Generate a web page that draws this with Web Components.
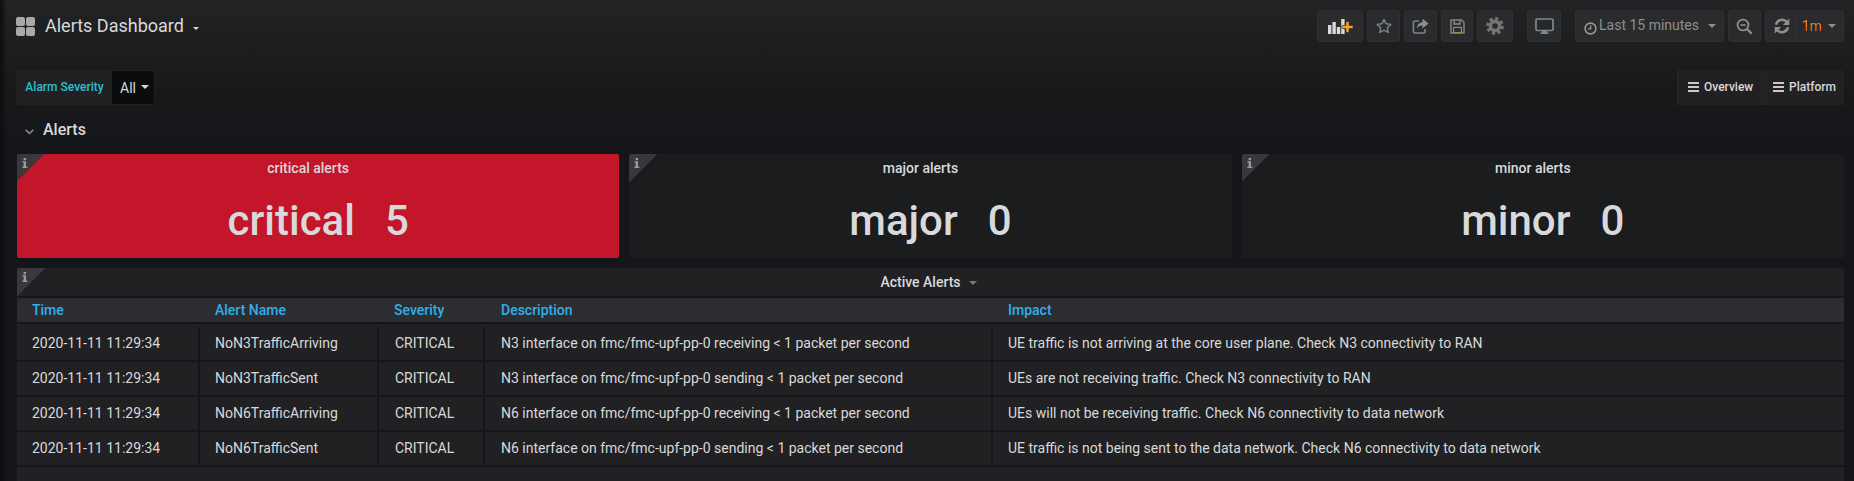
<!doctype html>
<html>
<head>
<meta charset="utf-8">
<title>Alerts Dashboard</title>
<style>
  html, body { margin: 0; height: 481px; overflow: hidden; }
  body {
    font-family: Roboto, "Liberation Sans", sans-serif;
    font-size: 14px;
    color: #d8d9da;
    background:
      linear-gradient(to right, #0c0d0f 0, rgba(12,13,15,0) 7px),
      linear-gradient(to bottom, #222324 0, #19191b 90px, #141619 150px);
  }
</style>
</head>
<body>
<gf-navbar title-text="Alerts Dashboard">
  <gf-btn w="46">
    <svg width="26" height="16" viewBox="0 0 26 16">
      <g fill="#d8d9da"><rect x="1" y="7" width="3.4" height="9"/><rect x="5.4" y="4" width="3.4" height="12"/><rect x="9.8" y="9" width="3.4" height="7"/><rect x="14.2" y="1" width="3.4" height="15"/></g>
      <path d="M19 3.5h3v4h4v3h-4v4h-3v-4h-4v-3h4z" fill="#f5a623" stroke="#26272a" stroke-width=".6"/>
    </svg>
  </gf-btn>
  <gf-btn w="33">
    <svg width="16" height="16" viewBox="0 0 16 16"><path d="M8 1.4l2 4.4 4.8.6-3.5 3.3.9 4.8L8 12.1l-4.2 2.4.9-4.8L1.2 6.4 6 5.8z" fill="none" stroke="#7f8589" stroke-width="1.4" stroke-linejoin="round"/></svg>
  </gf-btn>
  <gf-btn w="33">
    <svg width="17" height="16" viewBox="0 0 17 16"><path d="M7 3H3a1.6 1.6 0 0 0-1.6 1.6v8.8A1.6 1.6 0 0 0 3 15h8.5a1.6 1.6 0 0 0 1.6-1.6V11" fill="none" stroke="#7f8589" stroke-width="1.6"/><path d="M10.5 0.8L16.5 5.6l-6 4.8V7.6C7.6 7.6 6 8.6 5 11c0-4 2-6.6 5.5-6.8z" fill="#8e8e8e"/></svg>
  </gf-btn>
  <gf-btn w="32">
    <svg width="15" height="15" viewBox="0 0 15 15"><path d="M1 1h10.5L14 3.5V14H1z" fill="none" stroke="#7f8589" stroke-width="1.5" stroke-linejoin="round"/><path d="M4 1.5v3.5h6V1.5" fill="none" stroke="#8e8e8e" stroke-width="1.3"/><rect x="3.6" y="8.4" width="7.8" height="5.2" fill="none" stroke="#a08a5c" stroke-width="1.2"/></svg>
  </gf-btn>
  <gf-btn w="36">
    <svg width="18" height="18" viewBox="0 0 18 18"><circle cx="9" cy="9" r="4.6" fill="none" stroke="#757575" stroke-width="3.6"/><circle cx="9" cy="9" r="7.4" fill="none" stroke="#757575" stroke-width="3" stroke-dasharray="3.1 2.71"/></svg>
  </gf-btn>
  <gf-btn w="34" class="sep">
    <svg width="19" height="17" viewBox="0 0 19 17"><rect x="1" y="1" width="17" height="11.5" rx="1.5" fill="#26272a" stroke="#7d8a94" stroke-width="1.7"/><path d="M7 13h5v1.6h1.5V16h-8v-1.4H7z" fill="#7d8a94"/></svg>
  </gf-btn>
  <gf-btn w="149" class="sep" pad="left">
    <svg width="13" height="13" viewBox="0 0 13 13" style="margin:5px 2px 0 0"><circle cx="6.5" cy="6.5" r="5.4" fill="none" stroke="#949494" stroke-width="1.6"/><path d="M6.7 3.2v3.6H4" fill="none" stroke="#949494" stroke-width="1.3"/></svg>
    <span>Last 15 minutes</span><i class="caret"></i>
  </gf-btn>
  <gf-btn w="33">
    <svg width="17" height="17" viewBox="0 0 17 17"><circle cx="7" cy="7" r="5.4" fill="none" stroke="#8e8e8e" stroke-width="1.8"/><path d="M4.4 7h5.2" stroke="#8e8e8e" stroke-width="1.6"/><path d="M11 11l4.6 4.6" stroke="#8e8e8e" stroke-width="2.2"/></svg>
  </gf-btn>
  <gf-btn w="79" pad="split">
    <svg width="16" height="16" viewBox="0 0 16 16"><path d="M2 6.800A6.200 6.200 0 0 1 12.800 4" fill="none" stroke="#8e8e8e" stroke-width="2.500"/><path d="M15.300 .5v6.500H8.800z" fill="#8e8e8e"/><path d="M14 9.200A6.200 6.200 0 0 1 3.200 12" fill="none" stroke="#8e8e8e" stroke-width="2.500"/><path d="M.7 15.500V9h6.500z" fill="#8e8e8e"/></svg>
    <b class="rate">1m</b><i class="caret"></i>
  </gf-btn>
</gf-navbar>

<gf-submenu>
  <gf-var-picker slot="left" label="Alarm Severity" value="All"></gf-var-picker>
  <gf-dash-link slot="right" style="width:85px">Overview</gf-dash-link>
  <gf-dash-link slot="right" style="width:82px">Platform</gf-dash-link>
</gf-submenu>

<gf-row-title>Alerts</gf-row-title>

<gf-panels>
  <gf-stat-panel heading="critical alerts" prefix="critical" value="5" tone="critical"></gf-stat-panel>
  <gf-stat-panel heading="major alerts" prefix="major" value="0"></gf-stat-panel>
  <gf-stat-panel heading="minor alerts" prefix="minor" value="0"></gf-stat-panel>
</gf-panels>

<gf-table-panel heading="Active Alerts"></gf-table-panel>

<script>
// corner marker shared by every panel
const infoCorner = `
  <div class="corner">
    <svg width="6" height="10" viewBox="0 0 6 10"><path d="M1.6 0h2.4v2.2H1.6zM.4 3.2H4v5.4h1.4V10H.4V8.6h1.2V4.6H.4z" fill="#9a9a9e"/></svg>
  </div>`;
const cornerCss = `
  .corner { position: absolute; left: 0; top: 0; width: 28px; height: 28px;
    background: linear-gradient(135deg, #38383d 0, #38383d 50%, transparent 50%); }
  .corner svg { position: absolute; left: 5px; top: 4px; }`;

class GfNavbar extends HTMLElement {
  constructor() {
    super();
    this.attachShadow({ mode: 'open' }).innerHTML = `
      <style>
        :host { display: flex; align-items: flex-start; height: 52px; padding: 10px 10px 0 16px; box-sizing: border-box; }
        .brand { display: flex; align-items: center; height: 32px; flex: 1; color: #d8d9da; }
        .name { font-size: 18px; margin-left: 10px; line-height: 32px; }
        .caret { margin: 4px 0 0 9px; border: 3.5px solid transparent; border-top-color: #d8d9da; border-bottom: 0; }
        .grid { display: grid; grid-template-columns: 9px 9px; gap: 1px; }
        .grid i { height: 9px; border-radius: 2px; background: #a9a9a9; }
        .tools { display: flex; gap: 4px; }
      </style>
      <div class="brand">
        <div class="grid"><i></i><i></i><i></i><i></i></div>
        <span class="name">${this.getAttribute('title-text')}</span>
        <i class="caret"></i>
      </div>
      <div class="tools"><slot></slot></div>`;
  }
}

class GfBtn extends HTMLElement {
  constructor() {
    super();
    this.attachShadow({ mode: 'open' }).innerHTML = `
      <style>
        :host { display: flex; align-items: center; justify-content: center; height: 32px; box-sizing: border-box;
          background: #2a2b2d; border: 1px solid #2f3033; border-radius: 3px; color: #8e8e8e; position: relative; }
        :host(.sep) { margin-left: 10px; }
        :host([pad="left"]) { justify-content: flex-start; padding-left: 8px; }
        :host([pad="split"]) { justify-content: flex-start; padding-left: 8px; }
        ::slotted(span) { font-size: 14px; line-height: 30px; margin-top: -2px; }
        ::slotted(.caret) { width: 0; height: 0; border: 4px solid transparent; border-top-color: #8e8e8e; border-bottom: 0; margin-left: 9px; }
        ::slotted(.rate) { font-weight: 400; font-size: 14px; margin-left: 12px; margin-top: -1px;
          background: linear-gradient(#ff9d1e, #f04d14); -webkit-background-clip: text; background-clip: text; color: transparent; }
        :host([pad="split"]) .div { position: absolute; left: 30px; top: 0; bottom: 0; width: 1px; background: #2f3033; }
        :host([pad="split"]) ::slotted(.caret) { margin-left: 6px; }
      </style>
      <div class="div"></div><slot></slot>`;
    this.style.width = this.getAttribute('w') + 'px';
  }
}

class GfSubmenu extends HTMLElement {
  constructor() {
    super();
    this.attachShadow({ mode: 'open' }).innerHTML = `
      <style>
        :host { display: flex; justify-content: space-between; height: 35px; margin-top: 18px; padding: 0 10px 0 16px; }
        .right { display: flex; }
      </style>
      <div><slot name="left"></slot></div>
      <div class="right"><slot name="right"></slot></div>`;
  }
}

class GfVarPicker extends HTMLElement {
  constructor() {
    super();
    this.attachShadow({ mode: 'open' }).innerHTML = `
      <style>
        :host { display: flex; height: 35px; width: 139px; box-sizing: border-box; border: 1px solid #212124; border-radius: 3px; }
        .label { width: 95px; background: #212124; color: #2abfd4; font-size: 12px; font-weight: 500; display: flex; align-items: center; justify-content: center; box-sizing: border-box; padding-bottom: 2px; }
        .value { flex: 1; background: #0b0c0e; color: #d8d9da; font-size: 14px; display: flex; align-items: center; padding-left: 8px; border-radius: 0 3px 3px 0; }
        .caret { margin-left: 5px; margin-top: -1px; border: 4px solid transparent; border-top-color: #d8d9da; border-bottom: 0; }
      </style>
      <div class="label">${this.getAttribute('label')}</div>
      <div class="value">${this.getAttribute('value')}<i class="caret"></i></div>`;
  }
}

class GfDashLink extends HTMLElement {
  constructor() {
    super();
    this.attachShadow({ mode: 'open' }).innerHTML = `
      <style>
        :host { display: flex; align-items: center; height: 35px; box-sizing: border-box; padding: 0 0 2px 10px; background: #212124; border-left: 1px solid #26272a; color: #d8d9da; font-size: 12px; font-weight: 500; }
        .ham { width: 11px; height: 10px; margin-right: 5px; background: linear-gradient(#c8c8c8 0 2px, transparent 2px 4px, #c8c8c8 4px 6px, transparent 6px 8px, #c8c8c8 8px 10px); }
      </style>
      <i class="ham"></i><slot></slot>`;
  }
}

class GfRowTitle extends HTMLElement {
  constructor() {
    super();
    this.attachShadow({ mode: 'open' }).innerHTML = `
      <style>
        :host { display: flex; align-items: center; height: 49px; padding-left: 25px; font-size: 16px; font-weight: 500; color: #d8d9da; box-sizing: border-box; padding-bottom: 0; }
        svg { margin: 4px 9px 0 0; }
      </style>
      <svg width="9" height="6" viewBox="0 0 9 6"><path d="M.7.7l3.8 3.8L8.300.7" fill="none" stroke="#8e8e8e" stroke-width="1.500"/></svg>
      <slot></slot>`;
  }
}

class GfPanels extends HTMLElement {
  constructor() {
    super();
    this.attachShadow({ mode: 'open' }).innerHTML = `
      <style>
        :host { display: grid; grid-template-columns: repeat(3, 1fr); gap: 10px; padding: 0 10px 0 17px; }
      </style>
      <slot></slot>`;
  }
}

class GfStatPanel extends HTMLElement {
  constructor() {
    super();
    const g = n => this.getAttribute(n);
    this.attachShadow({ mode: 'open' }).innerHTML = `
      <style>
        :host { display: block; position: relative; height: 104px; background: #1b1c1e; border-radius: 2px; color: #d8d9da; overflow: hidden; }
        :host([tone="critical"]) { background: #c4162a; }
        .title { text-align: center; font-size: 14px; font-weight: 500; height: 29px; line-height: 29px; padding-right: 20px; }
        .big { display: flex; justify-content: center; gap: 30px; font-size: 42px; font-weight: 500; line-height: 72px; margin-top: 2px; }
        ${cornerCss}
      </style>
      ${infoCorner}
      <div class="title">${g('heading')}</div>
      <div class="big"><span>${g('prefix')}</span><span>${g('value')}</span></div>`;
  }
}

const ALERTS = [
  ['NoN3TrafficArriving', 'N3 interface on fmc/fmc-upf-pp-0 receiving < 1 packet per second', 'UE traffic is not arriving at the core user plane. Check N3 connectivity to RAN'],
  ['NoN3TrafficSent', 'N3 interface on fmc/fmc-upf-pp-0 sending < 1 packet per second', 'UEs are not receiving traffic. Check N3 connectivity to RAN'],
  ['NoN6TrafficArriving', 'N6 interface on fmc/fmc-upf-pp-0 receiving < 1 packet per second', 'UEs will not be receiving traffic. Check N6 connectivity to data network'],
  ['NoN6TrafficSent', 'N6 interface on fmc/fmc-upf-pp-0 sending < 1 packet per second', 'UE traffic is not being sent to the data network. Check N6 connectivity to data network'],
];

class GfTablePanel extends HTMLElement {
  constructor() {
    super();
    const esc = s => s.replace(/</g, '&lt;');
    const rows = ALERTS.map(a => `
      <div class="cell">2020-11-11 11:29:34</div>
      <div class="cell">${a[0]}</div>
      <div class="cell nudge">CRITICAL</div>
      <div class="cell nudge">${esc(a[1])}</div>
      <div class="cell last">${a[2]}</div>`).join('');
    this.attachShadow({ mode: 'open' }).innerHTML = `
      <style>
        :host { display: block; position: relative; margin: 10px 10px 0 17px; height: 230px; background: #212124; border-radius: 2px; overflow: hidden; color: #d8d9da; }
        .title { height: 28px; display: flex; align-items: center; justify-content: center; font-weight: 500; font-size: 14px; padding-right: 4px; box-sizing: border-box; }
        .title i { margin-left: 8px; border: 4px solid transparent; border-top-color: #7b7b7e; border-bottom: 0; margin-top: 2px; }
        .head, .rows { display: grid; grid-template-columns: 183px 179px 106px 508px 1fr; }
        .head { height: 24px; background: #2c2d30; border-bottom: 2px solid #141619; border-top: 2px solid #141619; }
        .head div { padding-left: 15px; line-height: 24px; color: #33aeea; font-weight: 500; }
        .head div:nth-child(4) { padding-left: 16px; }
        .rows { padding-top: 3px; }
        .cell { height: 33px; line-height: 33px; padding-left: 15px; border-right: 2px solid #141619; border-bottom: 2px solid #141619; white-space: nowrap; }
        .cell.nudge { padding-left: 16px; }
        .cell.last { border-right: 0; padding-left: 15px; }
        ${cornerCss}
      </style>
      ${infoCorner}
      <div class="title">${this.getAttribute('heading')}<i></i></div>
      <div class="head"><div>Time</div><div>Alert Name</div><div>Severity</div><div>Description</div><div>Impact</div></div>
      <div class="rows">${rows}</div>`;
  }
}

customElements.define('gf-navbar', GfNavbar);
customElements.define('gf-btn', GfBtn);
customElements.define('gf-submenu', GfSubmenu);
customElements.define('gf-var-picker', GfVarPicker);
customElements.define('gf-dash-link', GfDashLink);
customElements.define('gf-row-title', GfRowTitle);
customElements.define('gf-panels', GfPanels);
customElements.define('gf-stat-panel', GfStatPanel);
customElements.define('gf-table-panel', GfTablePanel);
</script>
</body>
</html>
